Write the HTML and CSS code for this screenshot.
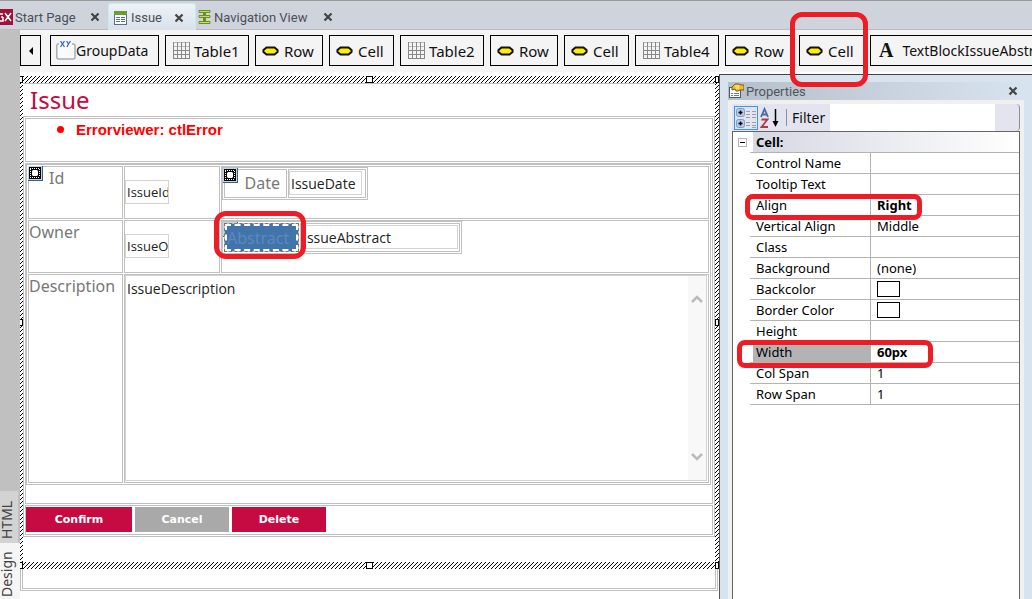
FILE: index.html
```html
<!DOCTYPE html>
<html lang="en">
<head>
<meta charset="utf-8">
<title>Issue</title>
<link rel="stylesheet" href="styles.css">
</head>
<body>
<svg class="defs" aria-hidden="true">
  <symbol id="grid" viewBox="0 0 17 17"><g fill="none" stroke="#888" shape-rendering="crispEdges"><path d="M0 .5H17M0 4.5H17" stroke="#bbb"/><path d="M0 8.5H17M0 12.5H17M0 16.5H17M.5 0V17M4.500 0V17M8.500 0V17M12.500 0V17M16.500 0V17"/></g></symbol>
  <symbol id="pill" viewBox="0 0 17 10"><path d="M4.500 1.500h8l3 2.500v2l-3 2.500h-8L1.500 6V4z" fill="#ffee00" stroke="#111" stroke-width="2"/><path d="M.5 4v2M16.500 4v2" stroke="#777"/></symbol>
  <symbol id="close" viewBox="0 0 10 10"><path d="M1.500 1.500l7 7M8.500 1.500l-7 7" stroke="#444" stroke-width="2.200"/></symbol>
  <symbol id="marker" viewBox="0 0 15 15"><rect width="15" height="15" fill="#3d5f80"/><rect width="14" height="14" fill="#c3d3ea"/><rect x="1" y="1" width="12" height="12" fill="#000"/><g fill="none" stroke="#fff" stroke-dasharray="1 1" shape-rendering="crispEdges"><path d="M2 2.500H12M2 11.500H12M2.500 3V11M11.500 3V11"/></g><path d="M5 4h4l1 1v4l-1 1H5L4 9V5z" fill="#fff"/></symbol>
</svg>
<div class="app">
  <nav class="tabs">
    <div class="tab tab-start"><svg class="gx" viewBox="0 0 13 16"><rect width="13" height="16" fill="#a01039"/><path d="M3 5H-1M3 8v4H-1M1 8h2M5 4l6 8M11 4l-6 8" stroke="#fff" stroke-width="1.500" fill="none"/></svg><a href="#">Start Page</a><button class="x" aria-label="Close Start Page"><svg><use href="#close"/></svg></button></div>
    <div class="tab tab-active"><svg class="doc" viewBox="0 0 13 14"><rect x=".5" y=".5" width="12" height="13" fill="#fff" stroke="#57708a"/><path d="M0 2H13" stroke="#6f9a35" stroke-width="4"/><path d="M2 6.500h4M7 6.500h4M2 8.500h4M7 8.500h4M2 10.500h4M7 10.500h4" stroke="#57708a"/></svg><a href="#">Issue</a><button class="x" aria-label="Close Issue"><svg><use href="#close"/></svg></button></div>
    <div class="tab tab-nav"><svg class="doc" viewBox="0 0 13 14"><path d="M1 .5h11v2H1zM1 5.500h11v2H1zM1 11.500h11v2H1z" fill="#c5dc6b" stroke="#6c8f22"/><path d="M6.500 3v2M6.500 8v3" stroke="#6c8f22" stroke-width="3"/></svg><a href="#">Navigation View</a><button class="x" aria-label="Close Navigation View"><svg><use href="#close"/></svg></button></div>
  </nav>
  <div class="main">
    <div class="rail"><button class="mode mode-html">HTML</button><button class="mode mode-design">Design</button></div>
    <div class="editor">
      <div class="crumbs">
        <button class="back" aria-label="Back"><svg viewBox="0 0 4 8"><path d="M4 0v8L0 4z"/></svg></button>
        <button class="crumb crumb-group"><svg class="group" viewBox="0 0 20 19"><path d="M3 3H2Q.8 3 .8 5V16Q.8 18 3 18H17Q19 18 19 16V5Q19 3 17 3H16" fill="#fafafa" stroke="#a4aeb8" stroke-width="1.500"/><path d="M4.500 0l4 6M8.500 0l-4 6M10.500 0l2 3 2-3M12.500 3l-1.500 3" stroke="#2f62c8" fill="none" stroke-width="1.200"/></svg>GroupData</button>
        <button class="crumb crumb-table"><svg class="grid"><use href="#grid"/></svg>Table1</button>
        <button class="crumb crumb-row"><svg class="pill"><use href="#pill"/></svg>Row</button>
        <button class="crumb crumb-cell"><svg class="pill"><use href="#pill"/></svg>Cell</button>
        <button class="crumb crumb-table"><svg class="grid"><use href="#grid"/></svg>Table2</button>
        <button class="crumb crumb-row"><svg class="pill"><use href="#pill"/></svg>Row</button>
        <button class="crumb crumb-cell"><svg class="pill"><use href="#pill"/></svg>Cell</button>
        <button class="crumb crumb-table"><svg class="grid"><use href="#grid"/></svg>Table4</button>
        <button class="crumb crumb-row"><svg class="pill"><use href="#pill"/></svg>Row</button>
        <button class="crumb crumb-cell marked"><svg class="pill"><use href="#pill"/></svg>Cell</button>
        <button class="crumb crumb-text"><b class="letter">A</b>TextBlockIssueAbstract</button>
      </div>
      <div class="work">
        <main class="designer">
          <div class="frame">
            <i class="handle top left"></i><i class="handle top center"></i><i class="handle top right"></i>
            <i class="handle middle left"></i><i class="handle middle right"></i>
            <i class="handle bottom left"></i><i class="handle bottom center"></i><i class="handle bottom right"></i>
            <div class="sheet">
              <h1>Issue</h1>
              <table class="t form">
                <tr><td class="error-cell"><ul><li>Errorviewer: ctlError</li></ul></td></tr>
                <tr><td class="data-cell">
                  <table class="t fields">
                    <tr>
                      <td class="name indent"><svg class="marker"><use href="#marker"/></svg><label for="id">Id</label></td>
                      <td class="short"><input id="id" class="box small" value="IssueId"></td>
                      <td class="rest">
                        <svg class="marker"><use href="#marker"/></svg>
                        <table class="t inner"><tr><td class="date-name"><label for="date">Date</label></td><td class="date-value"><input id="date" class="box date" value="IssueDate"></td></tr></table>
                      </td>
                    </tr>
                    <tr>
                      <td class="name"><label for="owner">Owner</label></td>
                      <td class="short"><input id="owner" class="box small" value="IssueOwner"></td>
                      <td class="rest">
                        <svg class="marker"><use href="#marker"/></svg>
                        <table class="t inner"><tr><td class="abs-name marked"><label class="selected" for="abs">Abstract</label></td><td class="abs-value"><input id="abs" class="box abs" value="IssueAbstract"></td></tr></table>
                      </td>
                    </tr>
                    <tr>
                      <td class="name"><label for="desc">Description</label></td>
                      <td class="memo-cell" colspan="2"><div class="memo"><textarea id="desc">IssueDescription</textarea><div class="scroll"><svg viewBox="0 0 12 9"><path d="M1 8l5-5 5 5"/></svg><svg viewBox="0 0 12 9"><path d="M1 1l5 5 5-5"/></svg></div></div></td>
                    </tr>
                  </table>
                </td></tr>
                <tr><td class="actions-cell"><div class="actions"><button class="act confirm">Confirm</button><button class="act cancel">Cancel</button><button class="act delete">Delete</button></div></td></tr>
              </table>
            </div>
          </div>
          <div class="foot"><div></div></div>
        </main>
        <aside class="props">
          <div class="props-title"><svg class="prop-icon" viewBox="0 0 16 16"><rect x="1.500" y="4.500" width="11" height="10" fill="#fff" stroke="#4b5a78"/><path d="M3 10.500h2M6 10.500h5M3 12.500h2M6 12.500h5" stroke="#5d7fb5"/><path d="M4 4l3-3h4l2 1h3v5h-4l-2 1H8L7 6 4 7z" fill="#edbd32" stroke="#7d5a12"/><path d="M7 3h4M8 5h3" stroke="#fff3a8"/></svg><span>Properties</span><button class="x" aria-label="Close Properties"><svg><use href="#close"/></svg></button></div>
          <div class="props-body">
            <div class="tools">
              <button class="tool cat" aria-label="Categorized"><svg viewBox="0 0 22 22"><g fill="#b9cce6" stroke="#7d9bc4"><rect x="1.500" y="1.500" width="8" height="8" rx="2"/><rect x="1.500" y="12.500" width="8" height="8" rx="2"/></g><path d="M3.500 5.500h4M5.500 3.500v4M3.500 16.500h4M5.500 14.500v4" stroke="#000" stroke-width="1.500"/><path d="M11 4.500h4M11 7.500h4M11 10.500h4M11 15.500h4M11 18.500h4M17 4.500h4M17 7.500h4M17 10.500h4M17 15.500h4M17 18.500h4M17 20.500h4" stroke="#9b9fb0"/></svg></button>
              <button class="tool sort" aria-label="Alphabetical"><svg viewBox="0 0 20 22"><path d="M1 10L4.500 2 8 10M2 7.500h5" fill="none" stroke="#4a68ae" stroke-width="1.800"/><path d="M1.500 12.500h6l-6 7.500h6.500" fill="none" stroke="#ab3b4c" stroke-width="1.800"/><path d="M15.500 2v15" stroke="#000" stroke-width="1.500"/><path d="M12.500 14h6l-3 6z"/></svg></button>
              <label for="filter">Filter</label><input id="filter" class="filter">
            </div>
            <div class="gridwrap">
              <table class="grid-table">
                <colgroup><col class="c-gut"><col class="c-key"><col></colgroup>
                <tr><td><button class="fold" aria-label="Collapse Cell"></button></td><th class="cat-name" colspan="2"><span>Cell:</span></th></tr>
                <tr><td></td><td class="key">Control Name</td><td class="val"></td></tr>
                <tr><td></td><td class="key">Tooltip Text</td><td class="val"></td></tr>
                <tr><td></td><td class="key marked mark-align">Align</td><td class="val"><b>Right</b></td></tr>
                <tr><td></td><td class="key">Vertical Align</td><td class="val">Middle</td></tr>
                <tr><td></td><td class="key">Class</td><td class="val"></td></tr>
                <tr><td></td><td class="key">Background</td><td class="val">(none)</td></tr>
                <tr><td></td><td class="key">Backcolor</td><td class="val"><span class="swatch"></span></td></tr>
                <tr><td></td><td class="key">Border Color</td><td class="val"><span class="swatch"></span></td></tr>
                <tr><td></td><td class="key">Height</td><td class="val"></td></tr>
                <tr><td></td><td class="key current marked mark-width">Width</td><td class="val"><b>60px</b></td></tr>
                <tr><td></td><td class="key">Col Span</td><td class="val">1</td></tr>
                <tr><td></td><td class="key">Row Span</td><td class="val">1</td></tr>
              </table>
            </div>
          </div>
        </aside>
      </div>
    </div>
  </div>
</div>
</body>
</html>
```
FILE: styles.css
```css
*, *::before, *::after { box-sizing: border-box; }
body { margin: 0; background: #fff; font: 14px "Noto Sans", sans-serif; color: #111; }
button, input, textarea { font: inherit; color: inherit; margin: 0; padding: 0; border: 0; border-radius: 0; background: none; }
svg { display: block; flex: none; }
.defs { position: absolute; width: 0; height: 0; }
.app { display: flex; flex-direction: column; height: 100vh; overflow: hidden; }

/* document tabs */
.tabs { display: flex; flex: none; height: 30px; padding-top: 2px; background: #cfd3dc; border-top: 1px solid #999; border-bottom: 1px solid #b9bbc0; font-family: Roboto, sans-serif; font-size: 13px; }
.tab { display: flex; align-items: center; height: 28px; }
.tab a { flex: 1; color: #4c5058; text-decoration: none; white-space: nowrap; }
.tab-start { width: 108px; gap: 2px; padding-right: 8px; }
.tab-active { width: 88px; gap: 4px; padding: 0 11px 0 5px; background: linear-gradient(#eef2f7, #d9e0ea); border: 1px solid #c2eef2; border-bottom: 0; border-radius: 3px 3px 0 0; }
.tab-nav { width: 141px; gap: 3px; padding: 0 4px 0 2px; }
.gx { width: 13px; height: 16px; }
.doc { width: 13px; height: 14px; }
.x svg { width: 10px; height: 10px; }
.x { flex: none; }

.main { display: flex; flex: 1; min-height: 0; }
.rail { display: flex; flex-direction: column; justify-content: flex-end; align-items: flex-start; flex: 0 0 20px; background: #c0c0c0; }
.mode { writing-mode: vertical-rl; rotate: 180deg; color: #444; font-size: 14px; line-height: 14px; text-align: left; }
.mode-html { width: 18px; height: 52px; padding: 4px 0 0 4px; background: #d3d3d3; }
.mode-design { width: 20px; height: 56px; padding: 2px 0 0 6px; background: #f5f5f5; }
.editor { display: flex; flex-direction: column; flex: 1; min-width: 0; }

/* element path */
.crumbs { display: flex; flex: none; height: 42px; gap: 6px; padding-top: 5px; background: #f4f4f4; }
.crumb, .back { display: flex; align-items: center; flex: none; height: 31px; border: 1px solid #000; white-space: nowrap; }
.crumb { font-size: 15px; }
.back { justify-content: center; width: 21px; margin-right: 3px; }
.back svg { width: 4px; height: 8px; }
.crumb-group { width: 109px; padding-left: 5px; font-size: 14px; }
.crumb-table { width: 84px; padding-left: 7px; gap: 4px; }
.crumb-row { width: 68px; padding-left: 6px; gap: 5px; }
.crumb-cell { width: 65px; padding-left: 6px; gap: 5px; }
.crumb-text { padding: 0 8px; gap: 9px; font-size: 14px; }
.group { width: 20px; height: 19px; }
.grid { width: 17px; height: 17px; }
.pill { width: 17px; height: 10px; }
.letter { font: bold 20px "Liberation Serif", serif; }

/* highlight rings */
.marked { position: relative; }
.marked::after { content: ""; position: absolute; z-index: 5; border: 5px solid #ee1c24; border-radius: 12px; pointer-events: none; }
.crumb.marked::after { inset: -24px -5px -22px -10px; }
.abs-name.marked::after { inset: -13px -8px -8px -11px; }
.mark-align::after { top: -1px; left: -5px; width: 177px; height: 26px; border-radius: 8px; }
.mark-width::after { top: -2px; left: -13px; width: 196px; height: 28px; border-radius: 8px; }

.work { display: flex; flex: 1; min-height: 0; }
.designer { flex: 1; min-width: 0; padding-top: 4px; }
.frame { position: relative; padding: 7px 4px 7px 3px; background: url("data:image/svg+xml,%3Csvg xmlns='http://www.w3.org/2000/svg' width='4' height='4' shape-rendering='crispEdges'%3E%3Cpath fill='%23fff' d='M0 0h4v4H0z'/%3E%3Cpath d='M3 0h1v1H3zM2 1h1v1H2zM1 2h1v1H1zM0 3h1v1H0z'/%3E%3C/svg%3E"); }
.sheet { padding-bottom: 25px; background: #fff; }
.handle { position: absolute; width: 7px; height: 7px; background: #fff; border: 1px solid #000; }
.handle.top { top: 0; } .handle.bottom { bottom: 0; } .handle.middle { top: 243px; }
.handle.left { left: 0; width: 3px; border-left: 0; } .handle.right { right: 0; width: 4px; } .handle.center { left: calc(50% - 4px); }
.foot { height: 22px; margin-right: 1px; padding: 0 1px 1px; border: 1px solid #c0c0c0; border-top: 0; }
.foot div { height: 100%; border: 1px solid #c0c0c0; border-top: 0; }

/* form */
.t { border: 1px solid #c0c0c0; border-collapse: separate; border-spacing: 1px; }
.t td { padding: 0; border: 1px solid #c0c0c0; vertical-align: top; }
.form { width: 100%; }
h1 { margin: 0; padding: 0 0 0 7px; border-top: 1px solid #c0c0c0; font-size: 24px; font-weight: 400; line-height: 32px; color: #c60a42; }
.error-cell { height: 44px; }
ul { margin: 0; padding: 2px 0 0 31px; list-style: none; font: bold 15px/17px "Liberation Sans", sans-serif; color: red; }
li { display: flex; align-items: center; gap: 12px; }
li::before { content: ""; width: 7px; height: 7px; border-radius: 50%; background: red; }
.data-cell { height: 341px; }
.fields { width: calc(100% - 1px); table-layout: fixed; }
.fields .name { width: 95px; height: 53px; }
.fields .short { width: 96px; padding-top: 13px; }
.fields .rest, .fields .indent { position: relative; }
.marker { position: absolute; left: -1px; top: -1px; width: 15px; height: 15px; }
.name label, .inner label { font: 16px/22px "Noto Sans", sans-serif; color: #777; white-space: nowrap; }
.fields .indent { padding-left: 20px; }
.box { display: block; height: 24px; padding-left: 1px; border: 1px solid #d3d3d3; color: #222; }
.box, .memo textarea { font-family: "Open Sans", sans-serif; }
.small { width: 44px; font-size: 13px; }
.rest > .marker { z-index: 1; left: 1px; top: 1px; }
.inner .date-name { width: 63px; height: 29px; padding: 2px 6px 0 0; text-align: right; }
.inner .date-value { width: 78px; padding: 1px 0 0; }
.date { width: 73px; }
.inner .abs-name { z-index: 2; width: 75px; height: 29px; padding: 0; }
.inner .abs-name .selected { display: block; height: 27px; overflow: hidden; border: 2px dashed #fff; outline: 1px dashed #777; background: #4174aa; color: #5c89bd; line-height: 25px; }
.inner .abs-value { width: 160px; padding: 1px 0 0; }
.abs { width: 157px; }
.memo-cell { height: 209px; }
.memo { display: flex; width: calc(100% - 1px); height: 206px; border: 1px solid #d3d3d3; }
.memo textarea { flex: 1; min-width: 0; padding: 3px 1px; line-height: 20px; resize: none; color: #222; }
.scroll { display: flex; flex-direction: column; justify-content: space-between; align-items: center; width: 18px; padding: 18px 0; background: #f8f8f8; }
.scroll svg { width: 12px; height: 9px; fill: none; stroke: #bbb; stroke-width: 2.5; }
.actions-cell { height: 30px; }
.actions { display: flex; gap: 3px; padding-top: 1px; }
.act { width: 94px; height: 25px; background: #c60a42; color: #fff; font: bold 11px "DejaVu Sans", sans-serif; }
.confirm { width: 106px; }
.cancel { background: #a9a9a9; }

/* property panel */
.props { display: flex; flex-direction: column; flex: none; width: 313px; margin-top: 2px; padding: 7px 8px 0 8px; background: #d8e3f0; border-top: 1px solid #444; border-left: 1px solid #555; }
.props-title { display: flex; align-items: center; flex: none; height: 18px; padding-right: 6px; gap: 2px; background: linear-gradient(90deg, #b5bfc9, #d8e3f0); color: #50545c; font-family: Roboto, sans-serif; font-size: 13px; }
.props-title span { flex: 1; }
.prop-icon { width: 16px; height: 16px; }
.props-body { display: flex; flex-direction: column; flex: 1; min-height: 0; padding: 4px 4px 0; background: #f0f0f0; }
.tools { display: flex; align-items: center; flex: none; height: 27px; padding: 0 24px 0 2px; background: #e4e4f0; border-right: 1px solid #8e8ea0; border-radius: 0 4px 4px 0; }
.tool { flex: none; }
.cat { width: 24px; height: 24px; border: 1px solid #3399ff; }
.sort { width: 28px; padding-left: 2px; }
.sort svg { width: 20px; height: 22px; }
.tools label { padding: 0 5px; border-left: 1px solid #8d8da5; line-height: 17px; }
.filter { flex: 1; min-width: 0; height: 27px; background: #fff; }
.gridwrap { flex: 1; min-height: 0; background: #fff; border: 1px solid #666; border-bottom: 0; }
.grid-table { width: 100%; table-layout: fixed; border-collapse: separate; border-spacing: 0; font-size: 13px; line-height: 20px; color: #000; }
.grid-table td, .grid-table th { height: 21px; padding: 0; white-space: nowrap; }
.c-gut { width: 17px; }
.c-key { width: 121px; }
.grid-table .key { padding-left: 6px; border-bottom: 1px solid #b3b3b3; border-right: 1px solid #b3b3b3; }
.grid-table .val { padding-left: 6px; border-bottom: 1px solid #b3b3b3; }
.grid-table .cat-name { padding: 0 0 0 3px; border-bottom: 1px solid #b3b3b3; text-align: left; }
.cat-name span { display: block; padding-left: 3px; background: linear-gradient(90deg, #d6d8e2, #fff); }
.grid-table .current { background: linear-gradient(90deg, #fff 3px, #b3b3b3 3px); }
.fold { display: block; width: 9px; height: 9px; margin-left: 5px; border: 1px solid #b5b5b5; background: linear-gradient(#000, #000) center / 5px 1px no-repeat; }
.swatch { display: block; width: 23px; height: 16px; border: 1px solid #000; }
```
